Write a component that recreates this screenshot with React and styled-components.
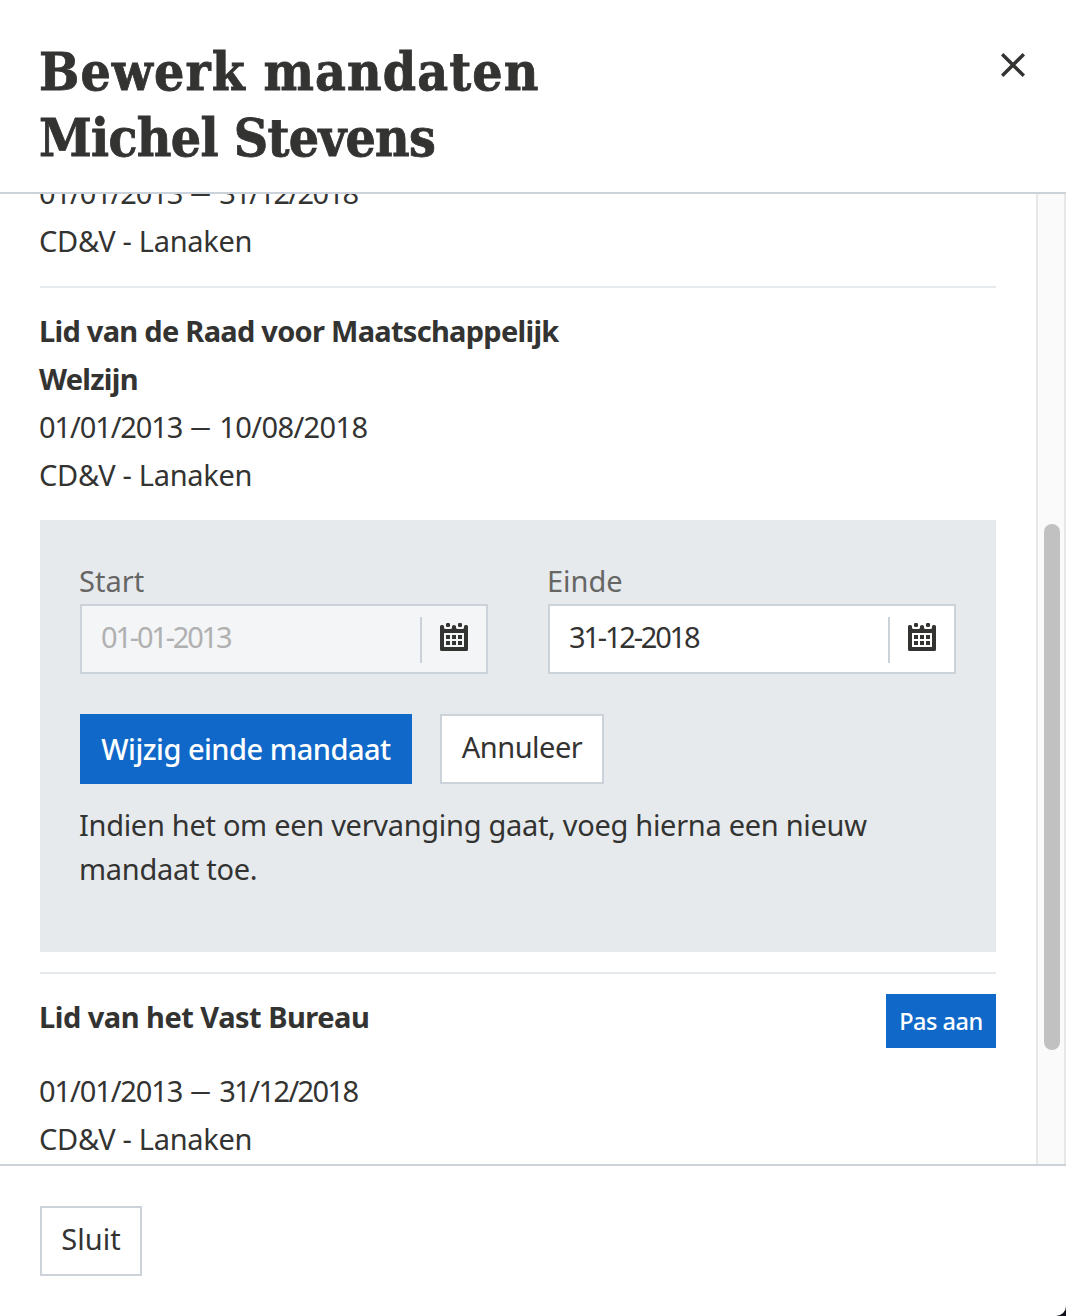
import React from "react";
import styled, { createGlobalStyle } from "styled-components";

const GlobalStyle = createGlobalStyle`
  *, *::before, *::after { box-sizing: border-box; }
  body { margin: 0; background: #10101c; }
`;

const Modal = styled.div`
  display: flex;
  flex-direction: column;
  height: 1316px;
  overflow: hidden;
  background: #fff;
  border-bottom-right-radius: 10px;
  color: #333332;
  font: 400 29px/48px "Noto Sans", "Open Sans", sans-serif;
  letter-spacing: -0.3px;
  white-space: nowrap;
`;

const Header = styled.header`
  display: flex;
  flex: none;
  justify-content: space-between;
  align-items: flex-start;
  height: 194px;
  padding: 38px 40px 0 39px;
  border-bottom: 2px solid #cbd2da;
`;

const Title = styled.h1`
  margin: 0;
  font: 700 53px/66px "DejaVu Serif Condensed", "DejaVu Serif", serif;
  font-stretch: condensed;
  -webkit-text-stroke: 0.8px currentColor;
`;

const Spaced = styled.span`
  display: block;
  letter-spacing: ${(p) => p.$tracking}px;
`;

const CloseButton = styled.button`
  display: flex;
  margin: 14px 0 0;
  padding: 0;
  border: 0;
  background: none;
  color: inherit;
`;

const Body = styled.main`
  display: flex;
  flex: none;
  height: 970px;
  overflow: hidden;
`;

const List = styled.ul`
  flex: 1;
  margin: -25px 0 0;
  padding: 0 40px;
  list-style: none;
`;

const Item = styled.li`
  padding-bottom: 21px;
  & + & {
    border-top: 2px solid #e6eaed;
    padding-top: 19px;
  }
`;

const ItemHeader = styled.div`
  display: flex;
  justify-content: space-between;
  align-items: flex-start;
  margin: 0 0 ${(p) => p.$gap || 0}px -1px;
`;

const ItemTitle = styled.h2`
  width: 540px;
  margin: 0;
  font-size: 29px;
  font-weight: 700;
  line-height: 48px;
  letter-spacing: ${(p) => p.$tracking}px;
  white-space: normal;
`;

const Line = styled.p`
  margin: 0 0 0 -1px;
`;

const Digits = styled.span`
  letter-spacing: ${(p) => p.$tracking}px;
`;

const Dash = styled.span`
  display: inline-block;
  width: 37px;
  height: 48px;
  padding-right: 1px;
  vertical-align: top;
  font-size: 20px;
  font-weight: 600;
  line-height: 48px;
  text-align: center;
`;

const EditPanel = styled.section`
  height: 432px;
  margin: 21px 0 -1px;
  padding: 40px;
  background: #e6eaed;
`;

const Fields = styled.div`
  display: grid;
  grid-template-columns: 1fr 1fr;
  column-gap: 60px;
`;

const Label = styled.label`
  display: block;
  height: 44px;
  margin-left: -1px;
  line-height: 42px;
  color: #666665;
  letter-spacing: 0;
`;

const DateField = styled.div`
  display: flex;
  align-items: center;
  height: 70px;
  padding-left: 19px;
  border: 2px solid #cbd2da;
  background: ${(p) => (p.$disabled ? "#f3f5f7" : "#fff")};
  color: ${(p) => (p.$disabled ? "#b0b0b0" : "#333332")};
`;

const DateValue = styled.span`
  flex: 1;
  margin-top: -4px;
  font-weight: 450;
  letter-spacing: -2.2px;
`;

const DateToggle = styled.span`
  display: flex;
  align-items: center;
  width: 66px;
  height: 46px;
  margin-top: 2px;
  padding: 0 0 6px 18px;
  border-left: 2px solid #cbd2da;
  color: #333332;
`;

const Actions = styled.div`
  display: flex;
  gap: 28px;
  margin-top: 40px;
`;

const Button = styled.button`
  width: ${(p) => p.$width}px;
  height: 70px;
  padding: 0 0 4px;
  border: 2px solid #cbd2da;
  border-radius: 0;
  background: #fff;
  color: #333332;
  font: inherit;
  line-height: 62px;
  letter-spacing: ${(p) => p.$tracking || 0}px;
`;

const PrimaryButton = styled(Button)`
  border: 0;
  background: #1069c9;
  color: #fff;
  font-weight: 550;
  line-height: 70px;
  padding-bottom: 0;
  letter-spacing: -0.5px;
`;

const SmallButton = styled(PrimaryButton)`
  height: 54px;
  margin-top: 1px;
  font-size: 23.5px;
  line-height: 54px;
`;

const Hint = styled.p`
  width: 800px;
  margin: 19px 0 0 -1px;
  line-height: 44px;
  white-space: normal;
`;

const Scrollbar = styled.div`
  width: 30px;
  padding: 330px 4px 0 6px;
  border: solid #e8e8e8;
  border-width: 0 2px;
  background: #fafafa;
`;

const Thumb = styled.div`
  width: 16px;
  height: 526px;
  border-radius: 8px;
  background: #c1c1c1;
`;

const Footer = styled.footer`
  flex: 1;
  padding: 40px;
  border-top: 2px solid #cbd2da;
`;

function CalendarIcon() {
  return (
    <svg width="28" height="28" viewBox="0 0 28 28" fill="currentColor">
      <path
        fillRule="evenodd"
        d="M0 3.500Q0 2 1.500 2H2.500Q4 2 4 3.500V4.500Q4 6 5.500 6H10.500Q12 6 12 4.500V3.500Q12 2 14 2Q16 2 16 3.500V4.500Q16 6 17.500 6H22.500Q24 6 24 4.500V3.500Q24 2 25.500 2H26.500Q28 2 28 3.500V26.500Q28 28 26.500 28H1.500Q0 28 0 26.500ZM4 10V24H24V10Z"
      />
      <rect x="6" y="0" width="4" height="4" rx="1.300" />
      <rect x="18" y="0" width="4" height="4" rx="1.300" />
      <path d="M6 12h4v4H6zM12 12h4v4h-4zM18 12h4v4h-4zM6 18h4v4H6zM12 18h4v4h-4zM18 18h4v4h-4z" />
    </svg>
  );
}

function Period({ from, to, tracking }) {
  return (
    <Line>
      <Digits $tracking={-1.1}>{from}</Digits>
      <Dash>—</Dash>
      <Digits $tracking={tracking}>{to}</Digits>
    </Line>
  );
}

function DateInput({ label, value, disabled }) {
  return (
    <div>
      <Label>{label}</Label>
      <DateField $disabled={disabled}>
        <DateValue>{value}</DateValue>
        <DateToggle>
          <CalendarIcon />
        </DateToggle>
      </DateField>
    </div>
  );
}

export default function App() {
  return (
    <>
      <GlobalStyle />
      <Modal>
        <Header>
          <Title>
            <Spaced $tracking={1.1}>Bewerk mandaten</Spaced>
            <Spaced $tracking={-0.7}>Michel Stevens</Spaced>
          </Title>
          <CloseButton aria-label="Sluit venster">
            <svg width="26" height="26" viewBox="0 0 26 26" fill="none" stroke="currentColor" strokeWidth="3.4">
              <path d="M2.200 2.200L23.800 23.800M23.800 2.200L2.200 23.800" />
            </svg>
          </CloseButton>
        </Header>
        <Body>
          <List>
            <Item>
              <Period from="01/01/2013" to="31/12/2018" tracking={-1.6} />
              <Line>CD&amp;V - Lanaken</Line>
            </Item>
            <Item>
              <ItemHeader>
                <ItemTitle $tracking={-0.72}>Lid van de Raad voor Maatschappelijk Welzijn</ItemTitle>
              </ItemHeader>
              <Period from="01/01/2013" to="10/08/2018" tracking={-0.6} />
              <Line>CD&amp;V - Lanaken</Line>
              <EditPanel>
                <Fields>
                  <DateInput label="Start" value="01-01-2013" disabled />
                  <DateInput label="Einde" value="31-12-2018" />
                </Fields>
                <Actions>
                  <PrimaryButton $width={332}>Wijzig einde mandaat</PrimaryButton>
                  <Button $width={164} $tracking={-0.5}>Annuleer</Button>
                </Actions>
                <Hint>Indien het om een vervanging gaat, voeg hierna een nieuw mandaat toe.</Hint>
              </EditPanel>
            </Item>
            <Item>
              <ItemHeader $gap={19}>
                <ItemTitle $tracking={-0.5}>Lid van het Vast Bureau</ItemTitle>
                <SmallButton $width={110}>Pas aan</SmallButton>
              </ItemHeader>
              <Period from="01/01/2013" to="31/12/2018" tracking={-1.6} />
              <Line>CD&amp;V - Lanaken</Line>
            </Item>
          </List>
          <Scrollbar>
            <Thumb />
          </Scrollbar>
        </Body>
        <Footer>
          <Button $width={102}>Sluit</Button>
        </Footer>
      </Modal>
    </>
  );
}
